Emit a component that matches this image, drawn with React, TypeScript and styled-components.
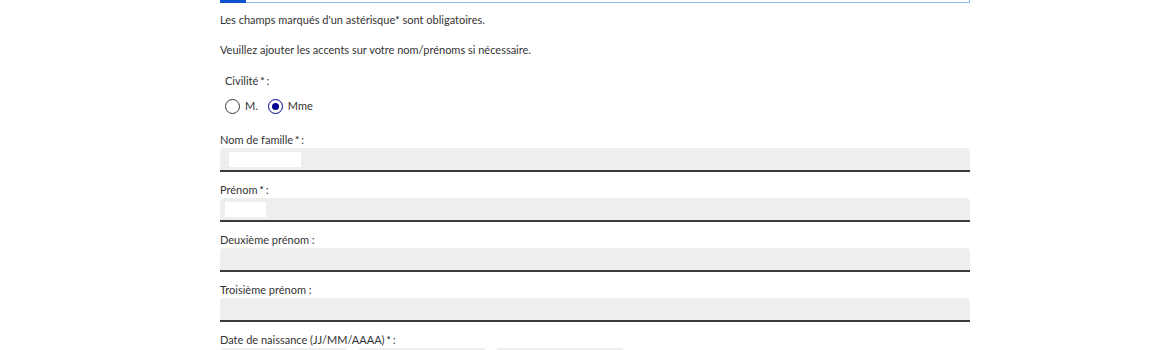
import React from "react";
import styled, { createGlobalStyle } from "styled-components";

const GlobalStyle = createGlobalStyle`
  html, body {
    margin: 0;
    padding: 0;
    background: #ffffff;
  }
  body {
    font-family: "Lato", "Noto Sans", sans-serif;
    color: #333333;
  }
`;

const Page = styled.div`
  width: 1170px;
  height: 350px;
  overflow: hidden;
  padding-left: 220px;
  box-sizing: border-box;
`;

const Form = styled.div`
  width: 750px;
  display: flex;
  flex-direction: column;
`;

const TopBox = styled.div`
  position: relative;
  height: 3px;
  box-sizing: border-box;
  border: 1px solid #8ab4ec;
  border-top: none;
`;

const ActiveTab = styled.div`
  position: absolute;
  left: -1px;
  top: 0;
  width: 26px;
  height: 3px;
  background: #1152d4;
`;

const Notice = styled.p<{ $top: number }>`
  margin: 0;
  font-size: 11px;
  line-height: 16px;
  margin-top: ${(p) => p.$top}px;
`;

const Star = styled.span`
  font-size: 10px;
  font-weight: 700;
  line-height: 0;
  vertical-align: 1px;
  margin: 0 2px 0 2px;
`;

const TightStar = styled(Star)`
  margin: 0 3px 0 0;
`;

const Fieldset = styled.div`
  margin-top: 15px;
  padding-left: 5px;
  display: flex;
  flex-direction: column;
  gap: 9px;
`;

const Label = styled.label`
  display: block;
  font-size: 11px;
  line-height: 16px;
  height: 16px;
`;

const RadioRow = styled.div`
  display: flex;
  align-items: center;
  gap: 10px;
`;

const RadioOption = styled.label`
  display: flex;
  align-items: center;
  gap: 5px;
  font-size: 11px;
  line-height: 16px;
`;

const Circle = styled.span<{ $checked?: boolean }>`
  width: 15px;
  height: 15px;
  box-sizing: border-box;
  border-radius: 50%;
  border: 1px solid ${(p) => (p.$checked ? "#000091" : "#3a3a3a")};
  display: flex;
  align-items: center;
  justify-content: center;

  &::after {
    content: "";
    display: ${(p) => (p.$checked ? "block" : "none")};
    width: 7px;
    height: 7px;
    border-radius: 50%;
    background: #000091;
  }
`;

const Group = styled.div<{ $top: number }>`
  margin-top: ${(p) => p.$top}px;
  display: flex;
  flex-direction: column;
`;

const Input = styled.div`
  height: 24px;
  box-sizing: border-box;
  background: #eeeeee;
  border-bottom: 2px solid #3a3a3a;
  border-radius: 4px 4px 0 0;
  display: flex;
  align-items: center;
`;

const Redacted = styled.span<{ $w: number; $left: number }>`
  display: block;
  width: ${(p) => p.$w}px;
  height: 15px;
  margin-left: ${(p) => p.$left}px;
  margin-top: 1px;
  background: #ffffff;
`;

const DateRow = styled.div`
  display: flex;
  gap: 10px;
`;

const DateInput = styled.div`
  width: 128px;
  height: 24px;
  box-sizing: border-box;
  background: #eeeeee;
  border-radius: 4px 4px 0 0;
  border-bottom: 2px solid #3a3a3a;
`;

export default function App() {
  return (
    <>
      <GlobalStyle />
      <Page>
        <Form>
          <TopBox>
            <ActiveTab />
          </TopBox>
          <Notice $top={9}>
            Les champs marqués d'un astérisque<TightStar>*</TightStar>sont obligatoires.
          </Notice>
          <Notice $top={14}>
            Veuillez ajouter les accents sur votre nom/prénoms si nécessaire.
          </Notice>

          <Fieldset>
            <Label>
              Civilité<Star>*</Star>:
            </Label>
            <RadioRow>
              <RadioOption>
                <Circle />
                M.
              </RadioOption>
              <RadioOption>
                <Circle $checked />
                Mme
              </RadioOption>
            </RadioRow>
          </Fieldset>

          <Group $top={18}>
            <Label>
              Nom de famille<Star>*</Star>:
            </Label>
            <Input>
              <Redacted $w={72} $left={9} />
            </Input>
          </Group>

          <Group $top={10}>
            <Label>
              Prénom<Star>*</Star>:
            </Label>
            <Input>
              <Redacted $w={41} $left={5} />
            </Input>
          </Group>

          <Group $top={10}>
            <Label>Deuxième prénom :</Label>
            <Input />
          </Group>

          <Group $top={10}>
            <Label>Troisième prénom :</Label>
            <Input />
          </Group>

          <Group $top={10}>
            <Label>
              Date de naissance (JJ/MM/AAAA)<Star>*</Star>:
            </Label>
            <DateRow>
              <DateInput />
              <DateInput />
              <DateInput />
            </DateRow>
          </Group>
        </Form>
      </Page>
    </>
  );
}
